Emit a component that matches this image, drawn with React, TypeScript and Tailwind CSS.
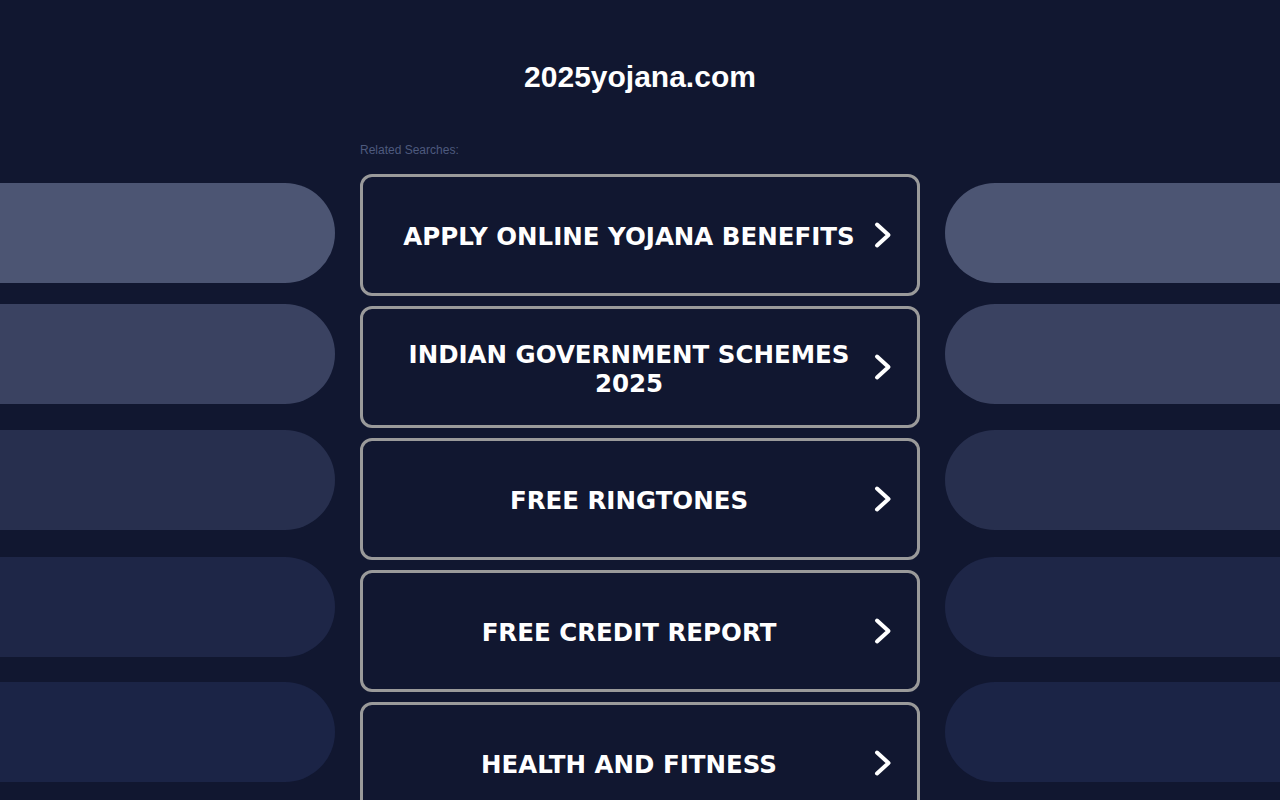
import React from "react";

const items = [
  "APPLY ONLINE YOJANA BENEFITS",
  "INDIAN GOVERNMENT SCHEMES 2025",
  "FREE RINGTONES",
  "FREE CREDIT REPORT",
  "HEALTH AND FITNESS",
];

function Chevron() {
  return (
    <svg width="20" height="28" viewBox="0 0 20 28" className="shrink-0">
      <path d="M4 3.5 L15.5 14 L4 24.5" fill="none" stroke="white" strokeWidth="4" strokeLinecap="round" strokeLinejoin="round" />
    </svg>
  );
}

function LeftPills() {
  return (
    <div className="flex flex-col pt-[43px]">
      <div className="h-[100px] rounded-r-[50px] bg-[#4c5573]" />
      <div className="mt-[21px] h-[100px] rounded-r-[50px] bg-[#3a4261]" />
      <div className="mt-[26px] h-[100px] rounded-r-[50px] bg-[#272f4e]" />
      <div className="mt-[27px] h-[100px] rounded-r-[50px] bg-[#1e2647]" />
      <div className="mt-[25px] h-[100px] rounded-r-[50px] bg-[#1b2446]" />
    </div>
  );
}

function RightPills() {
  return (
    <div className="flex flex-col pt-[43px]">
      <div className="h-[100px] rounded-l-[50px] bg-[#4c5573]" />
      <div className="mt-[21px] h-[100px] rounded-l-[50px] bg-[#3a4261]" />
      <div className="mt-[26px] h-[100px] rounded-l-[50px] bg-[#272f4e]" />
      <div className="mt-[27px] h-[100px] rounded-l-[50px] bg-[#1e2647]" />
      <div className="mt-[25px] h-[100px] rounded-l-[50px] bg-[#1b2446]" />
    </div>
  );
}

export default function App() {
  return (
    <div className="h-[800px] w-full overflow-hidden bg-[#111730]">
      <div className="pt-[60px] text-center">
        <h1 className="text-[30px] font-bold leading-[34px] text-white" style={{ fontFamily: '"Liberation Sans", Arial, sans-serif' }}>
          2025yojana.com
        </h1>
      </div>
      <div className="mt-[46px] grid grid-cols-[335px_560px_335px] gap-x-[25px]">
        <LeftPills />
        <div className="flex flex-col">
          <div className="text-[12px] leading-[21px] text-[#4e5a7e]" style={{ fontFamily: '"Liberation Sans", Arial, sans-serif' }}>
            Related Searches:
          </div>
          <div className="mt-[13px] flex flex-col gap-[10px]">
            {items.map((t) => (
              <div
                key={t}
                className="flex h-[122px] items-center rounded-[12px] border-[3px] border-[#9a9a9a] bg-[#111730] pl-[22px] pr-[24px]"
              >
                <div
                  className="mt-[3px] flex-1 text-center text-[24.5px] font-bold leading-[29px] text-white"
                  style={{ fontFamily: '"DejaVu Sans", Verdana, sans-serif' }}
                >
                  {t}
                </div>
                <Chevron />
              </div>
            ))}
          </div>
        </div>
        <RightPills />
      </div>
    </div>
  );
}
